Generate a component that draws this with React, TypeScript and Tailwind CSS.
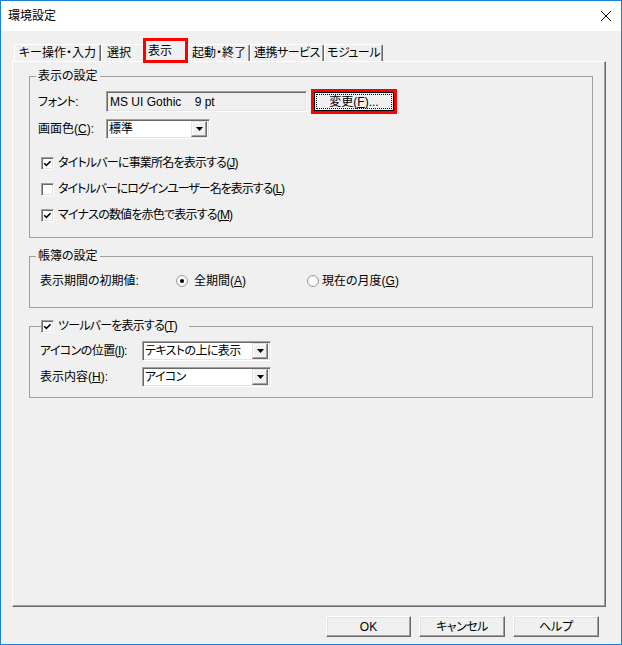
import React from "react";

function U({ c }: { c: string }) {
    return <span className="underline underline-offset-[1px]">{c}</span>;
}

function Tab({ w, children }: { w: string; children: React.ReactNode }) {
    return (
        <div className={`${w} h-[17px] flex items-center justify-center border-l border-t border-white border-r border-r-[#696969] shadow-[inset_-1px_0_0_#a0a0a0] rounded-tr-[2px] whitespace-nowrap`}>
            {children}
        </div>
    );
}

function Check({ on }: { on: boolean }) {
    return (
        <div className="w-[13px] h-[13px] shrink-0 bg-white border border-t-[#a0a0a0] border-l-[#a0a0a0] border-r-white border-b-white shadow-[inset_1px_1px_0_#696969,inset_-1px_-1px_0_#e3e3e3] flex items-center justify-center">
            {on && (
                <svg width="9" height="9" viewBox="0 0 9 9">
                    <path d="M1.2 4.2 L3.4 6.4 L7.6 2.2" fill="none" stroke="#000" strokeWidth="1.6" />
                </svg>
            )}
        </div>
    );
}

function Radio({ on }: { on: boolean }) {
    return (
        <svg width="12" height="12" viewBox="0 0 12 12" className="shrink-0">
            <circle cx="6" cy="6" r="5.5" fill="#fff" stroke="#9a9a9a" />
            <circle cx="6" cy="6" r="4.5" fill="none" stroke="#e3e3e3" />
            {on && <circle cx="6" cy="6" r="2" fill="#000" />}
        </svg>
    );
}

function Combo({ w, children }: { w: string; children: React.ReactNode }) {
    return (
        <div className={`${w} h-[20px] flex items-center bg-white border border-t-[#a0a0a0] border-l-[#a0a0a0] border-r-white border-b-white shadow-[inset_1px_1px_0_#696969,inset_-1px_-1px_0_#e3e3e3] pl-[2px] pr-[2px]`}>
            <span className="flex-1 whitespace-nowrap">{children}</span>
            <div className="w-[16px] h-[16px] flex items-center justify-center bg-[#f0f0f0] border border-t-[#e3e3e3] border-l-[#e3e3e3] border-r-[#696969] border-b-[#696969] shadow-[inset_-1px_-1px_0_#a0a0a0,inset_1px_1px_0_#fff]">
                <svg width="7" height="4" viewBox="0 0 7 4">
                    <polygon points="0,0 7,0 3.5,4" fill="#000" />
                </svg>
            </div>
        </div>
    );
}

function Button({ w, children }: { w: string; children: React.ReactNode }) {
    return (
        <div className={`${w} h-[21px] flex items-center justify-center bg-[#f0f0f0] border border-t-white border-l-white border-r-[#696969] border-b-[#696969] shadow-[inset_-1px_-1px_0_#a0a0a0,inset_1px_1px_0_#e3e3e3]`}>
            {children}
        </div>
    );
}

export default function App() {
    return (
        <div className="w-[622px] h-[645px] flex flex-col border border-[#1883d7] bg-[#f0f0f0] text-black text-[12px] leading-[14px] font-['Liberation_Sans','Noto_Sans_CJK_JP',sans-serif] [font-feature-settings:'palt']">
            <div className="h-[30px] shrink-0 bg-white flex items-center justify-between pl-[7px] pr-[10px]">
                <span>環境設定</span>
                <svg width="10" height="10" viewBox="0 0 10 10">
                    <path d="M0 0 L10 10 M10 0 L0 10" stroke="#000" strokeWidth="1" />
                </svg>
            </div>

            <div className="flex-1 flex flex-col pl-[11px] pr-[15px] pt-[7px]">
                <div className="h-[23px] flex items-end pl-[2px] relative z-10">
                    <Tab w="w-[87px]">キー操作・入力</Tab>
                    <div className="w-[42px] h-[17px] flex items-center pl-[5px] border-l border-t border-white">選択</div>
                    <div className="w-[45px] h-[25px] -mb-[2px] border-[3px] border-[#ff0000] bg-[#f0f0f0] flex items-center pl-[2px] pt-[1px]">表示</div>
                    <Tab w="w-[62px]">起動・終了</Tab>
                    <Tab w="w-[74px]"><span className="tracking-[-0.5px]">連携サービス</span></Tab>
                    <Tab w="w-[59px]"><span className="tracking-[-0.5px]">モジュール</span></Tab>
                </div>

                <div className="h-[546px] flex flex-col pl-[16px] pt-[7px] border-t border-l border-white border-r border-b border-r-[#696969] border-b-[#696969] shadow-[inset_-1px_-1px_0_#a0a0a0]">
                    <fieldset className="w-[564px] border border-[#a0a0a0] pb-[9px]">
                        <legend className="ml-[6px] px-[2px]">表示の設定</legend>
                        <div className="flex items-center h-[25px] mt-[6px] pl-[8px]">
                            <span className="w-[68px] tracking-[-0.5px]">フォント:</span>
                            <div className="w-[201px] h-[21px] flex items-center pl-[3px] whitespace-pre border border-t-[#a0a0a0] border-l-[#a0a0a0] border-r-white border-b-white shadow-[inset_1px_1px_0_#696969,inset_-1px_-1px_0_#e3e3e3]">
                                MS UI Gothic    9 pt
                            </div>
                            <div className="ml-[4px] w-[86px] h-[25px] border-[3px] border-[#ff0000]">
                                <div className="w-full h-full border border-black bg-[#f0f0f0] p-[1px]">
                                    <div className="w-full h-full border border-dotted border-black flex items-center justify-center">
                                        変更(<U c="F" />)...
                                    </div>
                                </div>
                            </div>
                        </div>
                        <div className="flex items-center h-[20px] mt-[5px] pl-[8px]">
                            <span className="w-[68px]">画面色(<U c="C" />):</span>
                            <Combo w="w-[104px]">標準</Combo>
                        </div>
                        <div className="flex flex-col mt-[11px] pl-[11px]">
                            <div className="h-[26px] flex items-center gap-[4px]">
                                <Check on={true} />
                                <span className="tracking-[-0.8px]">タイトルバーに事業所名を表示する(<U c="J" />)</span>
                            </div>
                            <div className="h-[26px] flex items-center gap-[4px]">
                                <Check on={false} />
                                <span className="tracking-[-1px]">タイトルバーにログインユーザー名を表示する(<U c="L" />)</span>
                            </div>
                            <div className="h-[26px] flex items-center gap-[4px]">
                                <Check on={true} />
                                <span className="tracking-[-0.8px]">マイナスの数値を赤色で表示する(<U c="M" />)</span>
                            </div>
                        </div>
                    </fieldset>

                    <fieldset className="w-[564px] mt-[11px] border border-[#a0a0a0] pb-[16px]">
                        <legend className="ml-[6px] px-[2px]">帳簿の設定</legend>
                        <div className="flex items-center h-[20px] mt-[8px] pl-[10px]">
                            <span className="w-[136px]">表示期間の初期値:</span>
                            <div className="w-[131px] flex items-center gap-[6px]">
                                <Radio on={true} />
                                <span>全期間(<U c="A" />)</span>
                            </div>
                            <div className="flex items-center gap-[3px]">
                                <Radio on={false} />
                                <span>現在の月度(<U c="G" />)</span>
                            </div>
                        </div>
                    </fieldset>

                    <fieldset className="w-[564px] mt-[11px] border border-[#a0a0a0] pb-[10px]">
                        <legend className="ml-[11px] pr-[12px] flex items-center gap-[4px] h-[14px]">
                            <Check on={true} />
                            <span className="tracking-[-0.8px]">ツールバーを表示する(<U c="T" />)</span>
                        </legend>
                        <div className="flex items-center h-[20px] mt-[8px] pl-[10px]">
                            <span className="w-[102px] tracking-[-0.6px]">アイコンの位置(<U c="I" />):</span>
                            <Combo w="w-[129px]"><span className="tracking-[-0.6px]">テキストの上に表示</span></Combo>
                        </div>
                        <div className="flex items-center h-[20px] mt-[6px] pl-[10px]">
                            <span className="w-[102px]">表示内容(<U c="H" />):</span>
                            <Combo w="w-[129px]"><span className="tracking-[-0.6px]">アイコン</span></Combo>
                        </div>
                    </fieldset>
                </div>

                <div className="flex justify-end gap-[8px] mt-[9px] pr-[7px]">
                    <Button w="w-[85px]">OK</Button>
                    <Button w="w-[86px]"><span className="tracking-[-0.5px]">キャンセル</span></Button>
                    <Button w="w-[86px]">ヘルプ</Button>
                </div>
            </div>
        </div>
    );
}
